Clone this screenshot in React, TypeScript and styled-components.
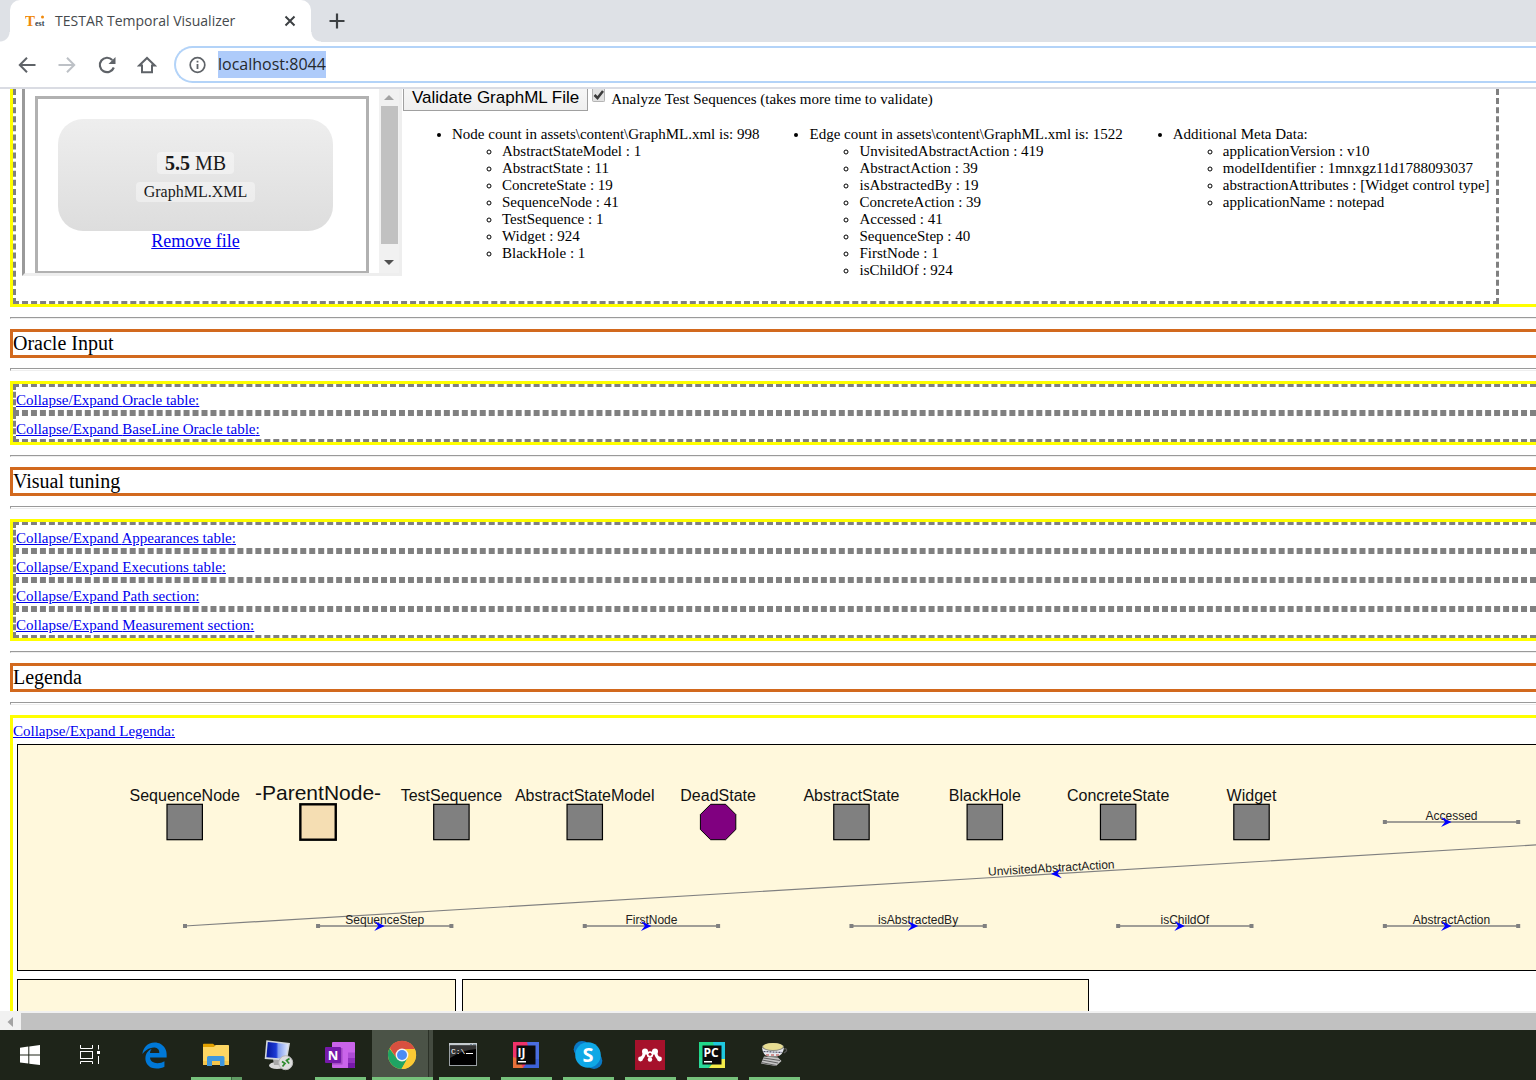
import React from "react";
import styled, { createGlobalStyle } from "styled-components";
import { FaEdgeLegacy } from "react-icons/fa";

const GlobalStyle = createGlobalStyle`
  * { box-sizing: border-box; }
  body {
    margin: 0;
    overflow: hidden;
    background: #fff;
    color: #000;
    font: 15px/17px "Liberation Serif", serif;
  }
  button, input { font: inherit; color: inherit; }
`;

const Screen = styled.div`
  display: flex;
  flex-direction: column;
  height: 100vh;
`;

/* ---------- browser chrome ---------- */

const TabStrip = styled.header`
  display: flex;
  height: 42px;
  padding-left: 10px;
  background: #dee1e6;
  font-family: "Open Sans", sans-serif;
`;

const Tab = styled.div`
  position: relative;
  display: flex;
  align-items: center;
  width: 301px;
  padding: 0 11px 0 15px;
  border-radius: 10px 10px 0 0;
  background: #fff;
  color: #45494d;
  font-size: 14px;
  line-height: 20px;

  &::before,
  &::after {
    content: "";
    position: absolute;
    bottom: 0;
    width: 10px;
    height: 10px;
  }
  &::before {
    left: -10px;
    background: radial-gradient(circle at 0 0, #dee1e6 9px, #fff 10px);
  }
  &::after {
    right: -10px;
    background: radial-gradient(circle at 100% 0, #dee1e6 9px, #fff 10px);
  }
`;

const TabTitle = styled.span`
  flex: 1;
  margin-left: 10px;
  white-space: nowrap;
`;

const IconButton = styled.button`
  display: grid;
  place-items: center;
  width: 20px;
  height: 20px;
  padding: 0;
  border: 0;
  background: none;
`;

const NewTab = styled(IconButton)`
  width: 52px;
  height: 42px;
`;

const Toolbar = styled.nav`
  display: flex;
  align-items: center;
  gap: 20px;
  height: 47px;
  padding: 4px 0 4px 17px;
  border-bottom: 2px solid #dadce3;
  background: #fff;
`;

const AddressBar = styled.label`
  display: flex;
  align-items: center;
  flex: 1;
  gap: 10px;
  height: 37px;
  margin-left: -4px;
  padding-left: 12px;
  border: 2px solid #b3d3f8;
  border-right: 0;
  border-radius: 19px 0 0 19px;
`;

const Nav = styled.div`
  display: flex;
  gap: 20px;
  margin-right: 1px;
`;

const Address = styled.input`
  field-sizing: content;
  height: 27px;
  padding: 0;
  border: 0;
  outline: 0;
  background: #aecbfa;
  color: #26292d;
  font: 16px/27px "Open Sans", sans-serif;
`;

/* ---------- page ---------- */

const Page = styled.main`
  display: flex;
  flex-direction: column;
  flex: 1;
  min-height: 0;
  padding-left: 10px;
  overflow: hidden;
`;

const Section = styled.section<{ $continued?: boolean; $fill?: boolean }>`
  flex: ${(p) => (p.$fill ? "1 0 0" : "none")};
  border: 3px solid #ff0;
  border-right: 0;
  border-top-width: ${(p) => (p.$continued ? 0 : 3)}px;
  border-bottom-width: ${(p) => (p.$fill ? 0 : 3)}px;
`;

const Rule = styled.hr<{ $tall?: boolean }>`
  flex: none;
  width: 100%;
  height: ${(p) => (p.$tall ? 3 : 2)}px;
  margin: 10px 0;
  border: 1px solid;
  border-color: #9a9a9a #eee #eee #9a9a9a;
  border-right: 0;
`;

const Heading = styled.h2`
  flex: none;
  margin: 0;
  border: 3px solid #d2691e;
  border-right: 0;
  font-size: 20px;
  font-weight: 400;
  line-height: 23px;
`;

const ToggleRow = styled.div<{ $plain?: boolean }>`
  padding: 5px 0 1px;
  border: ${(p) => (p.$plain ? "0" : "3px dashed #808080")};
  border-right: 0;
`;

const Link = styled.a`
  color: #00e;
  text-decoration: underline;
`;

const InputBox = styled.div`
  display: flex;
  align-items: flex-start;
  width: fit-content;
  height: 215px;
  padding: 0 6px;
  border: 3px dashed #808080;
  border-top: 0;
`;

const UploadFrame = styled.div`
  display: flex;
  width: 380px;
  height: 187px;
  border: 3px solid;
  border-color: #9a9a9a #eee #eee #9a9a9a;
  border-top: 0;
`;

const UploadView = styled.div`
  flex: 1;
  padding: 7px 10px 0;
  overflow: hidden;
`;

const DropZone = styled.div`
  height: 178px;
  padding: 20px 33px 0 20px;
  border: 3px solid #b1b1b1;
  text-align: center;
  font-size: 18px;
  line-height: 20px;
`;

const FileCard = styled.div`
  display: flex;
  flex-direction: column;
  align-items: center;
  gap: 8px;
  height: 112px;
  padding-top: 33px;
  border-radius: 25px;
  background: linear-gradient(#eee, #ddd);
  color: #1a1a1a;
`;

const Pill = styled.span<{ $size: number }>`
  padding: 0 8px;
  border-radius: 4px;
  background: rgba(255, 255, 255, 0.4);
  font-size: ${(p) => p.$size}px;
  line-height: ${(p) => (p.$size > 16 ? 22 : 20)}px;
`;

const VScroll = styled.div`
  display: flex;
  flex-direction: column;
  align-items: center;
  justify-content: space-between;
  width: 20px;
  padding: 6px 0 8px;
  background: #f1f1f1;
`;

const VThumb = styled.div`
  width: 17px;
  height: 138px;
  margin-bottom: 10px;
  background: #c1c1c1;
`;

const Arrow = styled.svg`
  display: block;
  flex: none;
`;

const Controls = styled.div`
  display: flex;
  align-items: flex-start;
  padding-left: 1px;
`;

const ValidateButton = styled.button`
  height: 22px;
  padding: 0 8px 4px;
  border: 1px solid #a0a0a0;
  border-top: 0;
  background: linear-gradient(#f6f6f6, #efefef);
  font: 17px/18px "Liberation Sans", Arial, sans-serif;
  white-space: nowrap;
`;

const Option = styled.label`
  position: relative;
  display: flex;
  gap: 6px;
  margin-left: 4px;
  line-height: 21px;
`;

const Check = styled.input`
  appearance: none;
  width: 13px;
  height: 13px;
  margin: 0;
  border: 1px solid #b4b4b4;
  border-top: 0;
  border-radius: 0 0 2px 2px;
  background: #e2e2e2;
`;

const Tick = styled.svg`
  position: absolute;
  left: 1px;
  top: 1px;
  pointer-events: none;
`;

const Stats = styled.div`
  display: flex;
  margin-top: 15px;
`;

const List = styled.ul`
  margin: 0;
  padding-left: 50px;
  white-space: nowrap;
`;

const Graph = styled.svg`
  display: block;
  width: 100%;
  height: 225px;
  font-family: "Liberation Sans", Arial, sans-serif;
`;

const Canvas = styled.div`
  margin: 3px 0 8px 4px;
  border: 1px solid #000;
  border-right: 0;
  background: #fff8dc;
`;

const Panels = styled.div`
  display: flex;
  gap: 6px;
  height: 100%;
  margin-left: 4px;
`;

const Panel = styled.div<{ $w: number }>`
  width: ${(p) => p.$w}px;
  border: 1px solid #000;
  border-bottom: 0;
  background: #fff8dc;
`;

const HScroll = styled.div`
  display: flex;
  align-items: center;
  height: 19px;
  padding: 2px 0 0 7px;
  gap: 8px;
  background: #f1f1f1;
`;

const HThumb = styled.div`
  flex: 1;
  height: 17px;
  background: #c1c1c1;
`;

/* ---------- taskbar ---------- */

const Taskbar = styled.footer`
  display: flex;
  height: 50px;
  background: #1e2419;
`;

const SystemButtons = styled.div`
  display: flex;
  margin-right: 3px;
`;

const TaskButton = styled.button<{ $w?: number; $active?: boolean; $line?: "one" | "many" }>`
  display: grid;
  place-items: center;
  width: ${(p) => p.$w ?? 62}px;
  height: 50px;
  padding: 0;
  border: 0 solid transparent;
  background: ${(p) =>
    p.$active
      ? "linear-gradient(90deg, transparent 1px, #4b5347 1px 57px, #2b3127 57px 58px, #444b40 58px)"
      : "none"};
  position: relative;

  &::after {
    content: "";
    position: absolute;
    left: ${(p) => (p.$active ? 1 : 6)}px;
    right: ${(p) => (p.$active ? 0 : 5)}px;
    bottom: 0;
    height: 3px;
    background: ${(p) =>
      p.$line === "one"
        ? "#76c17b"
        : p.$line === "many"
        ? "linear-gradient(90deg, #76c17b calc(100% - 11px), #3f6541 calc(100% - 11px) calc(100% - 10px), #5f9a63 calc(100% - 10px))"
        : "none"};
  }
`;

const Icon = ({ children }: { children: React.ReactNode }) => (
  <svg width="32" height="32" viewBox="0 0 32 32" aria-hidden="true">
    {children}
  </svg>
);

const WindowsIcon = () => (
  <Icon>
    <path fill="#fff" d="M6 8.8 14.3 7.5V15.6H6ZM15.3 7.4 26 6V15.6H15.3ZM6 16.6H14.3V24.6L6 23.4ZM15.3 16.6H26V26L15.3 24.7Z" />
  </Icon>
);

const TaskViewIcon = () => (
  <Icon>
    <g fill="none" stroke="#fff">
      <path d="M6.5 6V9.5H18.5V6M6.5 25V22.5H18.5V25" />
      <rect x="6.5" y="12.5" width="12" height="7" />
      <path d="M24.5 6V10.5M24.5 17V25" />
    </g>
    <rect x="23" y="12" width="3" height="3" fill="#fff" />
  </Icon>
);

const FolderIcon = () => (
  <Icon>
    <path fill="#e2a100" d="M3 5.5Q3 4.7 3.8 4.7H13L15 6.5V9H3Z" />
    <path fill="#fdd663" d="M3 8H14L15.6 6H28.2Q29 6 29 6.8V25.2Q29 26 28.2 26H3.8Q3 26 3 25.2Z" />
    <path fill="#f5c64b" d="M3 22H29V25.2Q29 26 28.2 26H3.8Q3 26 3 25.2Z" />
    <path fill="#3f97dd" d="M7 27V18.5Q7 17 8.5 17H23Q24.500 17 24.500 18.500V27H20V22H12V27Z" />
  </Icon>
);

const RemoteIcon = () => (
  <Icon>
    <defs>
      <linearGradient id="monitor" x1="0" x2="1">
        <stop offset="0.1" stopColor="#0a1ea8" />
        <stop offset="0.45" stopColor="#1d3bd6" />
        <stop offset="0.55" stopColor="#7f9cf0" />
        <stop offset="1" stopColor="#dfe8fb" />
      </linearGradient>
    </defs>
    <ellipse cx="15" cy="26.500" rx="8" ry="3.500" fill="#d9d9d9" />
    <path fill="#a9a9a9" d="M11 20H18L19 26H12Z" />
    <path fill="#d4d8dc" d="M4.300 1.300 28 4 25 21.500 2.700 20Z" />
    <path fill="url(#monitor)" d="M5.800 3 26.200 5.300 23.600 19.800 4.400 18.300Z" />
    <circle cx="23.700" cy="23.700" r="7" fill="#dedede" stroke="#b8b8b8" />
    <path fill="none" stroke="#2e8b2e" strokeWidth="1.700" d="M20 22.500 23 24.500 20.500 27.500M27.500 19.500 24.500 21.500 27.200 24.500" />
  </Icon>
);

const OneNoteIcon = () => (
  <Icon>
    <rect x="8" y="3" width="23" height="26" rx="1" fill="#ca64ea" />
    <rect x="24" y="13.500" width="7" height="6" fill="#ae4bd5" />
    <rect x="24" y="19" width="7" height="5" fill="#9332bf" />
    <path fill="#7719aa" d="M24 24H31V28Q31 29 30 29H24Z" />
    <rect x="8" y="9" width="10.500" height="16.500" fill="#8a3bab" opacity="0.600" />
    <rect x="1" y="8" width="16" height="16" rx="1" fill="#7719aa" />
    <text x="9" y="20.500" textAnchor="middle" fill="#fff" fontFamily="Open Sans, sans-serif" fontWeight="700" fontSize="13">N</text>
  </Icon>
);

const ChromeIcon = () => (
  <Icon>
    <circle cx="16" cy="16" r="14" fill="#fbc934" />
    <path fill="#d85040" d="M3.876 9A14 14 0 0 1 28.800 10H16L10.300 19Z" />
    <path fill="#1fa463" d="M3.500 9.600A14 14 0 0 0 15.500 30L21.500 19.500H10.800Z" />
    <path fill="#fbc934" d="M15.500 30A14 14 0 0 0 28.800 10H16L21.600 19.200Z" />
    <circle cx="16" cy="16" r="6.400" fill="#f3f3f3" />
    <circle cx="16" cy="16" r="5" fill="#4c8bf5" />
  </Icon>
);

const ConsoleIcon = () => (
  <Icon>
    <rect x="1.500" y="4.500" width="27" height="22" fill="#000" stroke="#9aa0a4" />
    <rect x="1" y="4" width="28" height="2.500" fill="#c6ccd0" />
    <path fill="#7d8f9d" d="M22 5H24V6H22ZM25 5H28V6H25Z" />
    <path fill="#333" d="M2 6.500H28V10Q14 11 2 19Z" />
    <text x="3" y="15" fill="#fff" fontFamily="Liberation Mono, monospace" fontSize="8">C:\</text>
    <path stroke="#fff" d="M18 14.500H25" />
  </Icon>
);

const JetIcon = ({ name, corners }: { name: string; corners: string[] }) => (
  <Icon>
    <rect x="3" y="3" width="26" height="26" fill={corners[0]} />
    <path fill={corners[1]} d="M17 3H29V20L22 24Z" />
    <path fill={corners[2]} d="M3 18 10 20 13 29H3Z" />
    <path fill={corners[3]} d="M13 29 20 20H29V29Z" />
    <rect x="6.500" y="6.500" width="19" height="19" fill="#0b0b0b" />
    <text x="7.500" y="18" fill="#fff" fontFamily="Open Sans, sans-serif" fontWeight="700" fontSize="12">{name}</text>
    <rect x="8" y="22" width="8" height="1.500" fill="#fff" />
  </Icon>
);

const SkypeIcon = () => (
  <Icon>
    <circle cx="10" cy="10.300" r="8.300" fill="#0a78c4" />
    <circle cx="22" cy="21.700" r="8.300" fill="#0a78c4" />
    <circle cx="16" cy="16" r="12.800" fill="#0fa8e6" />
    <text x="16" y="23" textAnchor="middle" fill="#fff" fontFamily="Open Sans, sans-serif" fontWeight="700" fontSize="20">S</text>
  </Icon>
);

const MendeleyIcon = () => (
  <Icon>
    <rect x="1" y="1" width="30" height="30" fill="#a6112b" />
    <g fill="#fff">
      <circle cx="11" cy="12.500" r="3" />
      <circle cx="21" cy="12.500" r="3" />
      <circle cx="16" cy="15.500" r="3.200" />
      <circle cx="6.500" cy="20" r="2.400" />
      <circle cx="16" cy="20.500" r="2.200" />
      <circle cx="25.500" cy="20" r="2.400" />
    </g>
    <path fill="none" stroke="#fff" strokeWidth="3" strokeLinejoin="round" d="M6.500 20Q10 18 10.500 12.500L16 16 21.500 12.500Q22 18 25.500 20" />
    <circle cx="16" cy="15.300" r="1.500" fill="#a6112b" />
  </Icon>
);

const BowlIcon = () => (
  <Icon>
    <path fill="#c4c4c4" d="M6 17.500 20 18.500 23.500 22 18 27 3 24.500Z" />
    <path stroke="#606060" strokeWidth="1" d="M4 21 20 24M5.500 19 22 21.500M3 23.500 18.500 26.500" />
    <path fill="#e6e8ee" d="M4 9H26Q25 16 19 17.500H10Q5 16 4 9Z" />
    <path stroke="#4a4f66" strokeWidth="1.200" strokeDasharray="2 1" d="M5.500 12.500 24 13.500" />
    <path stroke="#b33a35" d="M8 16H21" strokeDasharray="3 2" />
    <ellipse cx="15" cy="8" rx="11" ry="4" fill="#8c8c80" />
    <ellipse cx="15" cy="7.500" rx="10" ry="3.500" fill="#e6dc92" />
    <path fill="none" stroke="#555" strokeWidth="1.300" d="M26 10Q29 9 28.500 12L26 14" />
  </Icon>
);

/* ---------- data ---------- */

const stats = [
  {
    title: "Node count in assets\\content\\GraphML.xml is: 998",
    items: ["AbstractStateModel : 1", "AbstractState : 11", "ConcreteState : 19", "SequenceNode : 41", "TestSequence : 1", "Widget : 924", "BlackHole : 1"],
  },
  {
    title: "Edge count in assets\\content\\GraphML.xml is: 1522",
    items: ["UnvisitedAbstractAction : 419", "AbstractAction : 39", "isAbstractedBy : 19", "ConcreteAction : 39", "Accessed : 41", "SequenceStep : 40", "FirstNode : 1", "isChildOf : 924"],
  },
  {
    title: "Additional Meta Data:",
    items: ["applicationVersion : v10", "modelIdentifier : 1mnxgz11d1788093037", "abstractionAttributes : [Widget control type]", "applicationName : notepad"],
  },
];

const nodes = ["SequenceNode", "-ParentNode-", "TestSequence", "AbstractStateModel", "DeadState", "AbstractState", "BlackHole", "ConcreteState", "Widget"];

const STEP = 133.35;
const column = (i: number) => 166.7 + i * STEP;

const edges = [
  { name: "Accessed", col: 9, y: 77 },
  { name: "SequenceStep", col: 1, y: 181 },
  { name: "FirstNode", col: 3, y: 181 },
  { name: "isAbstractedBy", col: 5, y: 181 },
  { name: "isChildOf", col: 7, y: 181 },
  { name: "AbstractAction", col: 9, y: 181 },
];

const GraphNode = ({ name, x }: { name: string; x: number }) => {
  const parent = name === "-ParentNode-";
  return (
    <g>
      {name === "DeadState" ? (
        <path d={`M${x - 7.5} 59.300h15l10.200 10.200v15l-10.200 10.200h-15l-10.200-10.200v-15Z`} fill="#800080" stroke="#000" />
      ) : (
        <rect x={x - 17.7} y={59.3} width={35.4} height={35.4} fill={parent ? "#f5deb3" : "#808080"} stroke="#000" strokeWidth={parent ? 2.4 : 1.2} />
      )}
      <text x={x} y={parent ? 55 : 56} textAnchor="middle" fontSize={parent ? 21 : 16} fill="#111">
        {name}
      </text>
    </g>
  );
};

const Vee = () => <path d="M-10.500-5 0 0-10.500 5-6.500 0Z" fill="#00f" />;

const LegendGraph = () => (
  <Graph role="img" aria-label="Legenda of nodes and edges">
    <path d="M166.700 181 1900 77" stroke="#808080" strokeWidth="1.200" />
    <rect x="165" y="179" width="4" height="4" fill="#808080" />
    <text transform="translate(1033.500 127) rotate(-3.400)" textAnchor="middle" fontSize="12" fill="#222">
      UnvisitedAbstractAction
    </text>
    <g transform="translate(1033 129) rotate(176.600)">
      <Vee />
    </g>
    {nodes.map((name, i) => (
      <GraphNode key={name} name={name} x={column(i)} />
    ))}
    {edges.map(({ name, col, y }) => {
      const x = column(col);
      return (
        <g key={name}>
          <path d={`M${x} ${y}h${STEP}`} stroke="#808080" strokeWidth="1.500" />
          <rect x={x - 2} y={y - 2} width="4" height="4" fill="#808080" />
          <rect x={x + STEP - 2} y={y - 2} width="4" height="4" fill="#808080" />
          <text x={x + STEP / 2} y={y - 2} textAnchor="middle" fontSize="12" fill="#222">
            {name}
          </text>
          <g transform={`translate(${x + STEP / 2} ${y})`}>
            <Vee />
          </g>
        </g>
      );
    })}
  </Graph>
);

const Toggles = ({ names }: { names: string[] }) => (
  <Section>
    {names.map((name) => (
      <ToggleRow key={name}>
        <Link href="#">Collapse/Expand {name}:</Link>
      </ToggleRow>
    ))}
  </Section>
);

const Title = ({ children }: { children: React.ReactNode }) => (
  <>
    <Rule />
    <Heading>{children}</Heading>
    <Rule $tall />
  </>
);

export default function App() {
  return (
    <Screen>
      <GlobalStyle />
      <TabStrip>
        <Tab>
          <svg width="20" height="20" viewBox="0 0 20 20" aria-hidden="true">
            <text x="0" y="15" fontWeight="700" fontFamily="Liberation Serif, serif">
              <tspan fontSize="15" fill="#f08a0c">T</tspan>
              <tspan fontSize="8" fill="#36434f">est</tspan>
            </text>
            <circle cx="17.500" cy="6" r="1.500" fill="#f08a0c" />
          </svg>
          <TabTitle>TESTAR Temporal Visualizer</TabTitle>
          <IconButton aria-label="Close tab">
            <svg width="12" height="12" viewBox="0 0 12 12">
              <path d="M1.500 1.500 10.500 10.500M10.500 1.500 1.500 10.500" stroke="#3c4043" strokeWidth="2" />
            </svg>
          </IconButton>
        </Tab>
        <NewTab aria-label="New tab">
          <svg width="16" height="16" viewBox="0 0 16 16">
            <path d="M8 .5V15.500M.5 8H15.500" stroke="#3c4043" strokeWidth="2.200" />
          </svg>
        </NewTab>
      </TabStrip>
      <Toolbar>
        <Nav>
          <IconButton aria-label="Back">
            <svg width="20" height="20" viewBox="0 0 20 20" fill="none" stroke="#5f6368" strokeWidth="2">
              <path d="M18.500 10H3.500M10 2.800 2.800 10 10 17.200" />
            </svg>
          </IconButton>
          <IconButton aria-label="Forward">
            <svg width="20" height="20" viewBox="0 0 20 20" fill="none" stroke="#bdc1c6" strokeWidth="2">
              <path d="M1.500 10H16.500M10 2.800 17.200 10 10 17.200" />
            </svg>
          </IconButton>
          <IconButton aria-label="Reload">
            <svg width="20" height="20" viewBox="0 0 20 20">
              <path d="M16.800 12.500A7.200 7.200 0 1 1 15.300 5" fill="none" stroke="#5f6368" strokeWidth="2.200" />
              <path d="M18.500 2V9H11.500Z" fill="#5f6368" />
            </svg>
          </IconButton>
          <IconButton aria-label="Home">
            <svg width="20" height="20" viewBox="0 0 20 20">
              <path d="M2.200 10.500 10 3 17.800 10.500H15V17.200H5V10.500Z" fill="none" stroke="#5f6368" strokeWidth="2" />
            </svg>
          </IconButton>
        </Nav>
        <AddressBar>
          <svg width="20" height="20" viewBox="0 0 20 20" role="img" aria-label="Site information">
            <circle cx="9.500" cy="10" r="7.300" fill="none" stroke="#5f6368" strokeWidth="1.700" />
            <path d="M9.500 9V14M9.500 5.800V7.500" stroke="#5f6368" strokeWidth="1.800" />
          </svg>
          <Address aria-label="Address" defaultValue="localhost:8044" />
        </AddressBar>
      </Toolbar>

      <Page>
        <Section $continued>
          <InputBox>
            <UploadFrame>
              <UploadView>
                <DropZone>
                  <FileCard>
                    <Pill $size={20}>
                      <strong>5.5</strong> MB
                    </Pill>
                    <Pill $size={16}>GraphML.XML</Pill>
                  </FileCard>
                  <Link href="#">Remove file</Link>
                </DropZone>
              </UploadView>
              <VScroll>
                <Arrow width="10" height="5" viewBox="0 0 10 5">
                  <path d="M0 5 5 0 10 5Z" fill="#a3a3a3" />
                </Arrow>
                <VThumb />
                <Arrow width="10" height="5" viewBox="0 0 10 5">
                  <path d="M0 0 5 5 10 0Z" fill="#505050" />
                </Arrow>
              </VScroll>
            </UploadFrame>
            <div>
              <Controls>
                <ValidateButton>Validate GraphML File</ValidateButton>
                <Option>
                  <Check type="checkbox" defaultChecked />
                  <Tick width="12" height="10" viewBox="0 0 12 10">
                    <path d="M1.500 5 4.500 8 10 1" fill="none" stroke="#3c3c3c" strokeWidth="2.500" />
                  </Tick>
                  Analyze Test Sequences (takes more time to validate)
                </Option>
              </Controls>
              <Stats>
                {stats.map((group) => (
                  <List key={group.title}>
                    <li>
                      {group.title}
                      <List>
                        {group.items.map((item) => (
                          <li key={item}>{item}</li>
                        ))}
                      </List>
                    </li>
                  </List>
                ))}
              </Stats>
            </div>
          </InputBox>
        </Section>

        <Title>Oracle Input</Title>
        <Toggles names={["Oracle table", "BaseLine Oracle table"]} />

        <Title>Visual tuning</Title>
        <Toggles names={["Appearances table", "Executions table", "Path section", "Measurement section"]} />

        <Title>Legenda</Title>
        <Section $fill>
          <ToggleRow $plain>
            <Link href="#">Collapse/Expand Legenda:</Link>
          </ToggleRow>
          <Canvas>
            <LegendGraph />
          </Canvas>
          <Panels>
            <Panel $w={439} />
            <Panel $w={627} />
          </Panels>
        </Section>
      </Page>

      <HScroll>
        <Arrow width="6" height="10" viewBox="0 0 6 10">
          <path d="M6 0V10L0.500 5Z" fill="#a3a3a3" />
        </Arrow>
        <HThumb />
      </HScroll>

      <Taskbar>
        <SystemButtons>
          <TaskButton $w={60} aria-label="Start"><WindowsIcon /></TaskButton>
          <TaskButton $w={60} aria-label="Task view"><TaskViewIcon /></TaskButton>
        </SystemButtons>
        <TaskButton aria-label="Edge"><FaEdgeLegacy size={27} color="#0078d7" /></TaskButton>
        <TaskButton $line="many" aria-label="File Explorer"><FolderIcon /></TaskButton>
        <TaskButton aria-label="Remote Desktop"><RemoteIcon /></TaskButton>
        <TaskButton $line="one" aria-label="OneNote"><OneNoteIcon /></TaskButton>
        <TaskButton $line="one" $active aria-label="Chrome"><ChromeIcon /></TaskButton>
        <TaskButton $line="one" aria-label="Command Prompt"><ConsoleIcon /></TaskButton>
        <TaskButton $line="one" aria-label="IntelliJ IDEA"><JetIcon name="IJ" corners={["#f0326a", "#4a6de0", "#e8713a", "#3d62d8"]} /></TaskButton>
        <TaskButton $line="one" aria-label="Skype"><SkypeIcon /></TaskButton>
        <TaskButton $line="one" aria-label="Mendeley"><MendeleyIcon /></TaskButton>
        <TaskButton $line="one" aria-label="PyCharm"><JetIcon name="PC" corners={["#21d789", "#1fc8e0", "#2bd99a", "#f5ec4a"]} /></TaskButton>
        <TaskButton $line="one" aria-label="Viewer"><BowlIcon /></TaskButton>
      </Taskbar>
    </Screen>
  );
}
